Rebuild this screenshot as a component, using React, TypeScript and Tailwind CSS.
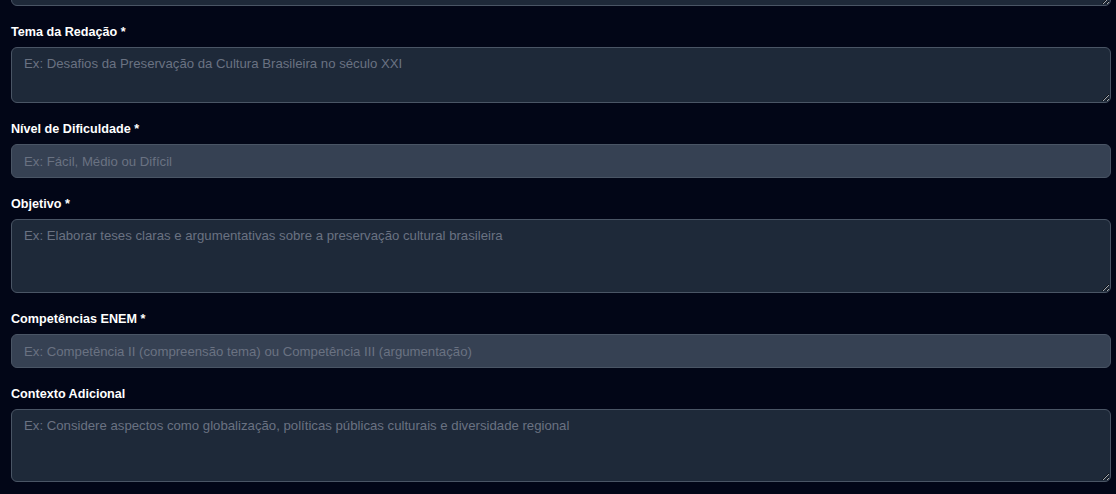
import { useState } from "react";

type Field = {
  id: string;
  label: string;
  placeholder: string;
  kind: "input" | "textarea";
  height?: string;
};

const fields: Field[] = [
  {
    id: "tema",
    label: "Tema da Redação *",
    placeholder: "Ex: Desafios da Preservação da Cultura Brasileira no século XXI",
    kind: "textarea",
    height: "h-[56px]",
  },
  {
    id: "nivel",
    label: "Nível de Dificuldade *",
    placeholder: "Ex: Fácil, Médio ou Difícil",
    kind: "input",
  },
  {
    id: "objetivo",
    label: "Objetivo *",
    placeholder: "Ex: Elaborar teses claras e argumentativas sobre a preservação cultural brasileira",
    kind: "textarea",
    height: "h-[74px]",
  },
  {
    id: "competencias",
    label: "Competências ENEM *",
    placeholder: "Ex: Competência II (compreensão tema) ou Competência III (argumentação)",
    kind: "input",
  },
  {
    id: "contexto",
    label: "Contexto Adicional",
    placeholder: "Ex: Considere aspectos como globalização, políticas públicas culturais e diversidade regional",
    kind: "textarea",
    height: "h-[73px]",
  },
];

export default function App() {
  const [values, setValues] = useState<Record<string, string>>({});

  const update = (id: string, v: string) =>
    setValues((prev) => ({ ...prev, [id]: v }));

  return (
    <div className="min-h-screen h-[494px] overflow-hidden bg-[#020617] font-['Liberation_Sans',Arial,sans-serif]">
      <div className="flex flex-col gap-4 pl-[11px] pr-[5px]">
        {/* tail of the previous field, scrolled off the top */}
        <textarea
          readOnly
          className="mt-[-67px] h-[73px] w-full rounded-md border border-gray-600 bg-gray-800 px-3 py-1.5 text-[13.2px] leading-5 text-white outline-none [color-scheme:dark]"
        />

        {fields.map((f) => (
          <div key={f.id} className="flex flex-col">
            <label
              htmlFor={f.id}
              className="mb-[5px] block text-[12.6px] leading-5 font-bold text-white"
            >
              {f.label}
            </label>
            {f.kind === "textarea" ? (
              <textarea
                id={f.id}
                value={values[f.id] ?? ""}
                onChange={(e) => update(f.id, e.target.value)}
                placeholder={f.placeholder}
                className={`${f.height} w-full rounded-md border border-gray-600 bg-gray-800 px-3 py-1.5 text-[13.2px] leading-5 text-white outline-none placeholder:text-gray-500 [color-scheme:dark]`}
              />
            ) : (
              <input
                id={f.id}
                value={values[f.id] ?? ""}
                onChange={(e) => update(f.id, e.target.value)}
                placeholder={f.placeholder}
                className="h-[34px] w-full rounded-md border border-gray-600 bg-gray-700 px-3 py-1.5 text-[13.2px] leading-5 text-white outline-none placeholder:text-gray-500"
              />
            )}
          </div>
        ))}
      </div>
    </div>
  );
}
